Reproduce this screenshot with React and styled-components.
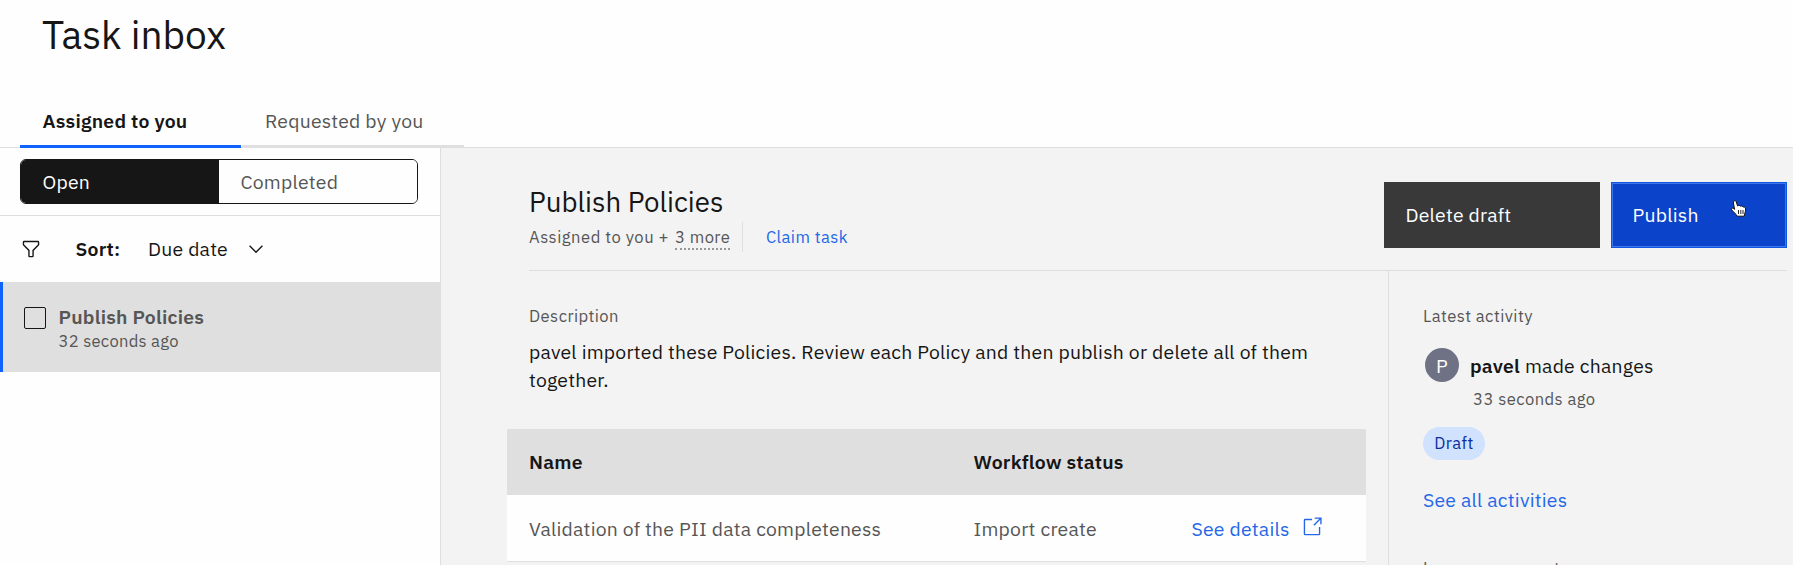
import React from 'react';
import styled, { createGlobalStyle } from 'styled-components';

const Global = createGlobalStyle`
  * { box-sizing: border-box; }
  body { margin: 0; background: #fefefe; font-family: 'IBM Plex Sans', Roboto, 'Liberation Sans', sans-serif; font-size: 19.4px; color: #161616; overflow: hidden; }
  button { font: inherit; border: 0; background: none; padding: 0; text-align: left; }
  h1, h2, p { margin: 0; font-weight: 400; }
  svg { flex: none; }
`;

const Text = styled.span`
  display: block;
  white-space: nowrap;
  font-size: ${p => p.$size || 19.4}px;
  line-height: ${p => p.$line || 27}px;
  font-weight: ${p => p.$weight || 400};
  letter-spacing: ${p => p.$track || 0}px;
  color: ${p => p.$color || '#161616'};
`;

const Page = styled.div`
  width: 1793px; height: 565px; overflow: hidden;
  display: flex; flex-direction: column;
`;
const Header = styled.header`
  height: 148px; flex: none; border-bottom: 1px solid #dedede;
  display: flex; flex-direction: column; justify-content: space-between;
`;
const PageTitle = styled.div` padding: 10px 0 0 42px; `;
const Tabs = styled.nav` display: flex; gap: 1px; padding-left: 20px; margin-bottom: -1px; `;
const Tab = styled.button`
  width: ${p => (p.$active ? 221 : 222)}px; height: 49px; padding: 0 0 4px ${p => (p.$active ? 22.5 : 23)}px;
  border-bottom: 3px solid ${p => (p.$active ? '#1062fe' : '#dfdfdf')};
`;
const Body = styled.div` display: flex; flex: 1; min-height: 0; `;
const Sidebar = styled.aside` width: 441px; flex: none; border-right: 1px solid #dedede; `;
const SwitchBar = styled.div` height: 68px; padding: 11px 22px 0 20px; border-bottom: 1px solid #dedede; `;
const Switcher = styled.div`
  display: flex; height: 45px; border: 1px solid #161616; border-radius: 6px; overflow: hidden;
`;
const SwitchOption = styled.button`
  flex: 1; padding: 0 21.5px 1px; background: ${p => (p.$active ? '#161616' : '#fefefe')};
`;
const SortBar = styled.div` height: 66px; display: flex; align-items: center; padding: 0 0 1px 20px; `;
const SortLabel = styled.div` width: 72.5px; margin-left: 33.5px; `;
const SortValue = styled.div` display: flex; align-items: center; gap: 17px; `;
const TaskItem = styled.div`
  height: 90px; width: 441px; display: flex; gap: 12.5px; padding: 25px 0 0 21px;
  background: #dfdfdf; border-left: 3px solid #1062fe;
`;
const TaskText = styled.div` margin-top: -3px; `;
const Checkbox = styled.span` width: 22px; height: 22px; border: 1px solid #161616; border-radius: 2px; `;
const Detail = styled.main` flex: 1; background: #f3f3f3; padding: 0 6px 0 88px; display: flex; flex-direction: column; `;
const DetailHeader = styled.div`
  height: 123px; flex: none; display: flex; justify-content: space-between; border-bottom: 1px solid #dedede;
`;
const Heading = styled.div` padding-top: 36px; `;
const Assignment = styled.div` display: flex; align-items: center; height: 30px; margin-top: 2px; `;
const More = styled.div` margin-left: 6px; padding: 2px 0 1px; border-bottom: 2px dotted #999; `;
const Claim = styled.div` margin-left: 12px; padding-left: 22.5px; height: 30px; border-left: 1px solid #dedede; display: flex; align-items: center; `;
const Actions = styled.div` display: flex; gap: 11px; padding-top: 34px; `;
const ActionButton = styled.button`
  width: ${p => p.$width}px; height: 66px; padding: 0 0 2px ${p => (p.$primary ? 20.5 : 21.5)}px; display: flex; align-items: center;
  background: ${p => (p.$primary ? '#0b43cb' : '#393939')};
  ${p => p.$primary && 'border: 1px solid #0f56e6; box-shadow: inset 0 0 0 1px #3d76e8;'}
`;
const Cursor = styled.svg` margin-left: 31.5px; margin-top: -9px; `;
const Columns = styled.div` flex: 1; display: flex; min-height: 0; `;
const Content = styled.section` width: 860px; flex: none; padding-top: 32px; border-right: 1px solid #dedede; `;
const Description = styled.div` margin-top: 8px; `;
const Table = styled.div` width: 859px; margin: 36px 0 0 -22px; `;
const Row = styled.div`
  height: ${p => (p.$head ? 66 : 67)}px; display: grid; grid-template-columns: 444.5px 218px 1fr; align-items: center;
  padding: 0 0 ${p => (p.$head ? 2 : 0)}px 22px; background: ${p => (p.$head ? '#dfdfdf' : '#fefefe')};
  border-bottom: ${p => (p.$head ? 'none' : '1px solid #dfdfdf')};
`;
const DetailsLink = styled.div` display: flex; align-items: center; gap: 11px; svg { margin-top: -2px; } `;
const Activity = styled.section` padding: 32px 0 0 34px; `;
const Entry = styled.div` display: flex; align-items: center; gap: 11px; margin: 18px 0 0 2px; `;
const Avatar = styled.span`
  width: 34px; height: 34px; border-radius: 50%; background: #6f7285; display: flex; align-items: center; justify-content: center;
`;
const Message = styled.div` display: flex; gap: 5px; `;
const EntryTime = styled.div` margin: 6px 0 0 50px; `;
const Tag = styled.span`
  display: flex; align-items: center; justify-content: center; width: 62px; height: 33px; margin-top: 17px;
  border-radius: 17px; background: #d0e2fe;
`;
const AllLink = styled.div` margin-top: 26px; `;
const CommentLabel = styled.div` margin-top: 42px; `;

const muted = '#565656';
const blue = '#2467e8';

const FilterIcon = () => (
  <svg width="22" height="22" viewBox="0 0 32 32" fill="#161616">
    <path d="M18,28H14a2,2,0,0,1-2-2V18.41L4.59,11A2,2,0,0,1,4,9.59V6A2,2,0,0,1,6,4H26a2,2,0,0,1,2,2V9.59A2,2,0,0,1,27.41,11L20,18.41V26A2,2,0,0,1,18,28ZM6,6V9.59l8,8V26h4V17.59l8-8V6Z" />
  </svg>
);
const ChevronIcon = () => (
  <svg width="22" height="22" viewBox="0 0 32 32" fill="#161616">
    <path d="M16 22L6 12L7.4 10.6L16 19.2L24.6 10.6L26 12Z" />
  </svg>
);
const LaunchIcon = () => (
  <svg width="22" height="22" viewBox="0 0 32 32" fill={blue}>
    <path d="M26,28H6a2,2,0,0,1-2-2V6A2,2,0,0,1,6,4H16V6H6V26H26V16h2V26A2,2,0,0,1,26,28Z" />
    <path d="M20 2V4H26.586L18 12.586L19.414 14L28 5.414V12H30V2Z" />
  </svg>
);

export default function App() {
  return (
    <Page>
      <Global />
      <Header>
        <PageTitle><Text as="h1" $size={38.8} $line={50}>Task inbox</Text></PageTitle>
        <Tabs>
          <Tab $active><Text $weight={600} $track={0.22}>Assigned to you</Text></Tab>
          <Tab><Text $color={muted} $track={0.22}>Requested by you</Text></Tab>
        </Tabs>
      </Header>
      <Body>
        <Sidebar>
          <SwitchBar>
            <Switcher>
              <SwitchOption $active><Text $color="#fefefe" $track={0.22}>Open</Text></SwitchOption>
              <SwitchOption><Text $color={muted} $track={0.22}>Completed</Text></SwitchOption>
            </Switcher>
          </SwitchBar>
          <SortBar>
            <FilterIcon />
            <SortLabel><Text $weight={600} $track={0.22}>Sort:</Text></SortLabel>
            <SortValue>
              <Text $track={0.22}>Due date</Text>
              <ChevronIcon />
            </SortValue>
          </SortBar>
          <TaskItem>
            <Checkbox />
            <TaskText>
              <Text $weight={600} $color={muted} $line={25} $track={0.24}>Publish Policies</Text>
              <Text $size={16.6} $color={muted} $line={24} $track={0.27}>32 seconds ago</Text>
            </TaskText>
          </TaskItem>
        </Sidebar>
        <Detail>
          <DetailHeader>
            <Heading>
              <Text as="h2" $size={27.7} $line={36}>Publish Policies</Text>
              <Assignment>
                <Text $size={16.6} $color={muted} $track={0.5}>Assigned to you +</Text>
                <More><Text $size={16.6} $line={20} $color={muted} $track={0.44}>3 more</Text></More>
                <Claim><Text $size={16.6} $color={blue} $track={0.44}>Claim task</Text></Claim>
              </Assignment>
            </Heading>
            <Actions>
              <ActionButton $width={216}><Text $color="#fefefe" $track={0.22}>Delete draft</Text></ActionButton>
              <ActionButton $width={176} $primary>
                <Text $color="#fefefe" $track={0.22}>Publish</Text>
                <Cursor width="17" height="19" viewBox="0 0 17 19">
                  <path d="M4 1C5.2.2 6 1 6.3 2L7.6 6C9 5 10 5.4 10.4 6.3C11.6 5.6 12.6 6 13 7C14.6 6.5 15.6 7.5 15.6 9C15.8 12 14.5 13 14.3 16.2H7.2C6 14 3.5 12 1.6 9.8C.9 8.3 2 7.7 3.4 8.5L4.6 9.4L3.4 3C3.2 2 3.4 1.3 4 1Z" fill="#fff" stroke="#111" strokeWidth="1" />
                  <path d="M8.5 10V14M10.8 10V14M13 10V14" stroke="#111" strokeWidth=".9" />
                </Cursor>
              </ActionButton>
            </Actions>
          </DetailHeader>
          <Columns>
            <Content>
              <Text $size={16.6} $color={muted} $track={0.44}>Description</Text>
              <Description>
                <Text as="p" $line={27.5} $track={0.22}>pavel imported these Policies. Review each Policy and then publish or delete all of them<br />together.</Text>
              </Description>
              <Table>
                <Row $head>
                  <Text $weight={600} $track={0.22}>Name</Text>
                  <Text $weight={600} $track={0.22}>Workflow status</Text>
                </Row>
                <Row>
                  <Text $color={muted} $track={0.22}>Validation of the PII data completeness</Text>
                  <Text $color={muted} $track={0.22}>Import create</Text>
                  <DetailsLink>
                    <Text $color={blue} $track={0.22}>See details</Text>
                    <LaunchIcon />
                  </DetailsLink>
                </Row>
              </Table>
            </Content>
            <Activity>
              <Text $size={16.6} $color={muted} $track={0.44}>Latest activity</Text>
              <Entry>
                <Avatar><Text $color="#fff">P</Text></Avatar>
                <Message><Text $weight={600} $track={0.22}>pavel</Text><Text $track={0.22}>made changes</Text></Message>
              </Entry>
              <EntryTime><Text $size={16.6} $color={muted} $line={22} $track={0.44}>33 seconds ago</Text></EntryTime>
              <Tag><Text $size={16.6} $color="#0a2f9c" $track={0.44}>Draft</Text></Tag>
              <AllLink><Text $color={blue} $track={0.22}>See all activities</Text></AllLink>
              <CommentLabel><Text $size={16.6} $color={muted} $track={0.44}>Leave a comment</Text></CommentLabel>
            </Activity>
          </Columns>
        </Detail>
      </Body>
    </Page>
  );
}
